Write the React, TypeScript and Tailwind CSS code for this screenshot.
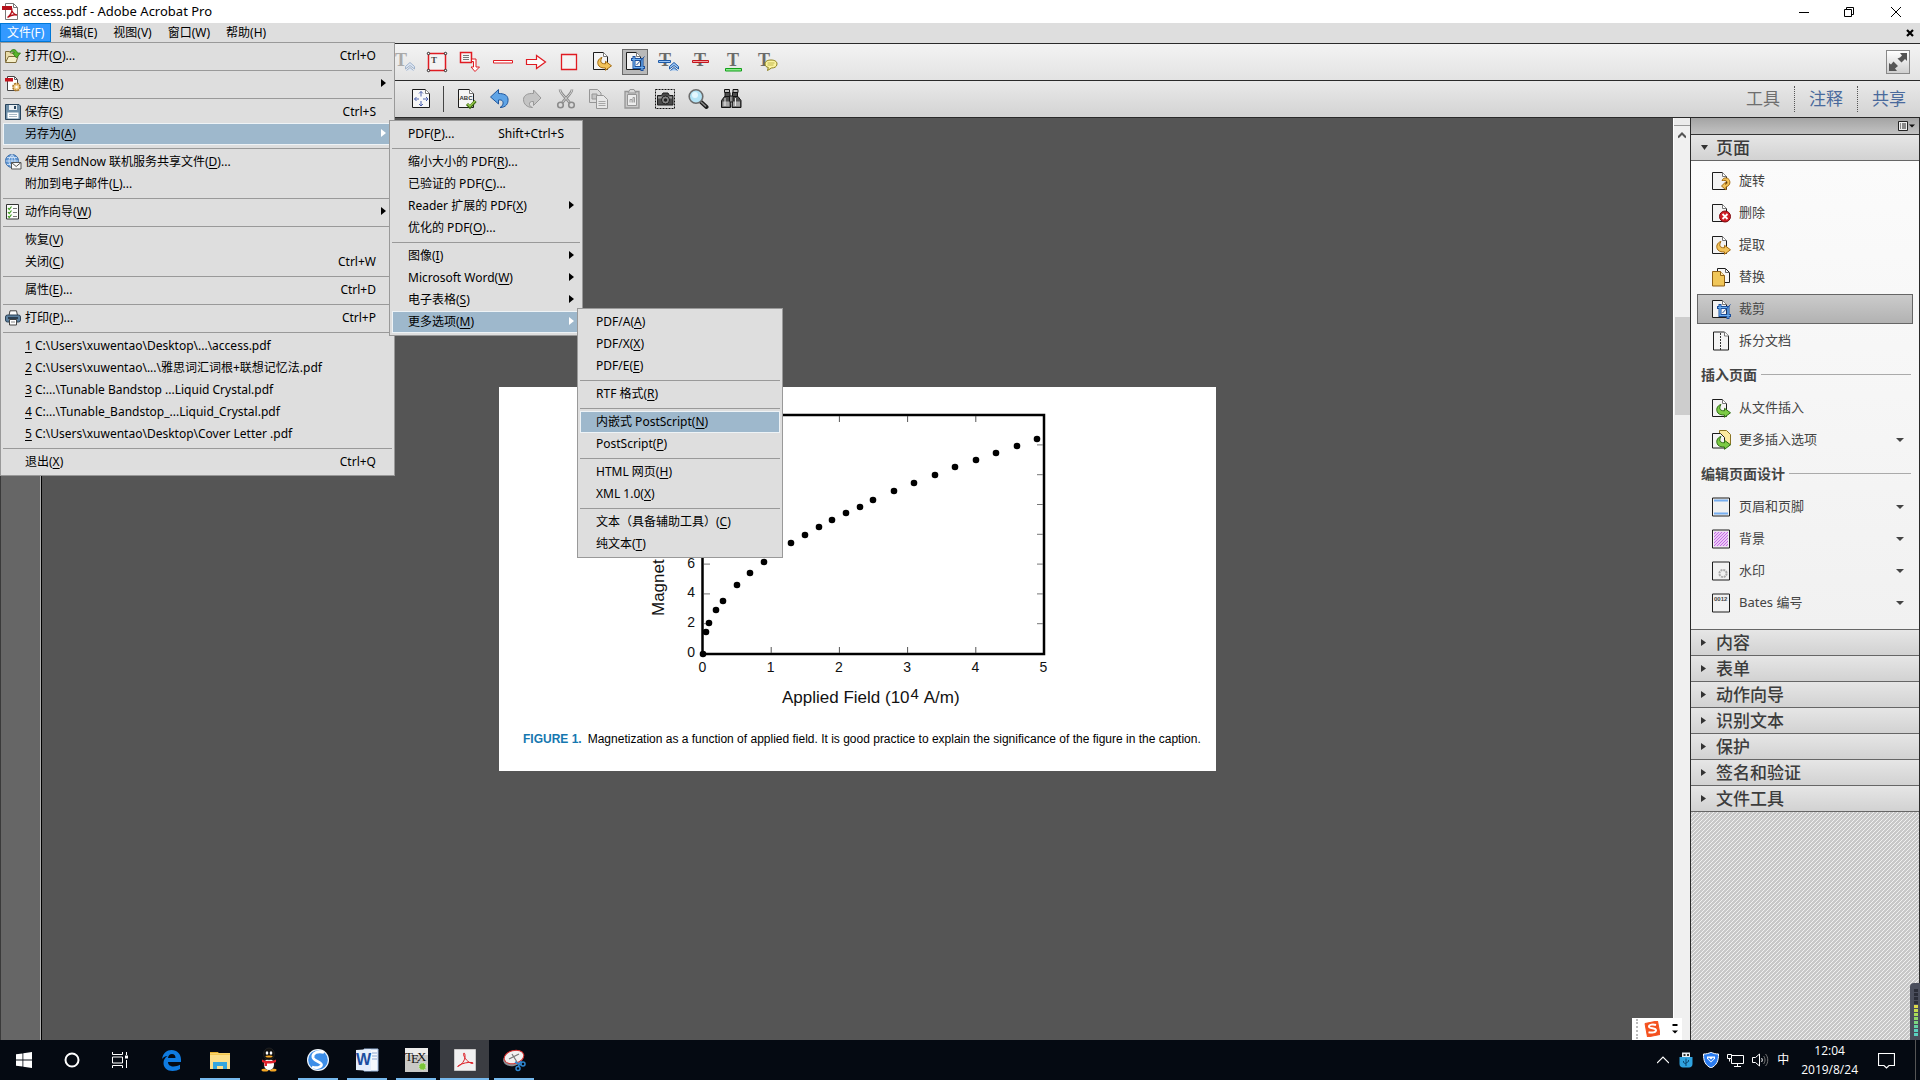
import React from 'react';

interface MenuEntry {
  label?: string;
  hotkey?: string;
  tail?: string;
  shortcut?: string;
  icon?: React.ReactNode;
  arrow?: boolean;
  active?: boolean;
  sub?: MenuEntry[];
  separator?: boolean;
}

const SEP: MenuEntry = { separator: true };

/* ---------- shared icon parts ---------- */

const Sheet = ({ fill = '#f4f4f4' }: { fill?: string }) => (
  <>
    <path d="M1.5 1.5h10l4 4v13h-14z" fill={fill} stroke="#1c1c1c" strokeLinejoin="round" />
    <path d="M11.5 1.5v4h4" fill="#fff" stroke="#777" />
  </>
);

const SheetIcon = ({ children }: { children?: React.ReactNode }) => (
  <svg width="20" height="20" viewBox="0 0 20 20">
    <Sheet />
    {children}
  </svg>
);

const CropMark = () => (
  <g fill="none">
    <path d="M9 5v11.500h11M6 8.500h11v11.500" stroke="#1d4f9c" strokeWidth="3" />
    <path d="M9 6v10.500h10M7 8.500h10v10.500" stroke="#6fb1f0" strokeWidth="1.200" />
    <path d="M11.500 14l8-8.500" stroke="#1d4f9c" />
  </g>
);

const SwooshRight = ({ fill, stroke }: { fill: string; stroke: string }) => (
  <path
    d="M10 6.500C6 7.500 4.500 12 7 15c1.500 1.800 4 2 6.500 2v2.300l6-4.500-6-4.500v2.500c-3 0-4.800-.800-4.700-2.800C8.800 8.500 9.300 7.500 10 6.500z"
    fill={fill}
    stroke={stroke}
    strokeLinejoin="round"
  />
);

const PdfIcon = () => (
  <svg width="17" height="17" viewBox="0 0 17 17">
    <path d="M3.500.500h8l4 4v12h-12z" fill="#fff" stroke="#777" />
    <path d="M11.500.500v4h4" fill="none" stroke="#777" />
    <path d="M5.500 14.500c3-2 5-6 4.300-9-.600 3 2 6 5.200 6.500-3-.600-7 .500-9.500 2.500z" fill="none" stroke="#b5121b" strokeWidth="1.300" />
    <path d="M0 3h10v4H0z" fill="#b5121b" />
  </svg>
);

/* ---------- file menu icons ---------- */

const OpenIcon = () => (
  <svg width="16" height="16" viewBox="0 0 16 16">
    <path d="M.5 13.500v-10h4l1 1.500h5v8.500z" fill="#e9dca8" stroke="#7d6b3a" />
    <path d="M.500 14.500l3-6h9.500l-2 6z" fill="#f6efc9" stroke="#7d6b3a" />
    <path d="M5 4c2-3.500 6-3.500 7.500 1H15.500l-4 5-4-5h2c-.500-2-2.500-2-4.500-1z" fill="#5ab52c" stroke="#2f7a14" strokeWidth=".8" />
  </svg>
);

const CreateIcon = () => (
  <svg width="16" height="16" viewBox="0 0 16 16">
    <path d="M2.500.500h7l3 3v11h-10z" fill="#fff" stroke="#444" />
    <path d="M9.500.500v3h3" fill="none" stroke="#666" />
    <path d="M0 2h8v3.500H0z" fill="#c4141d" />
    <circle cx="11.500" cy="11" r="3.600" fill="#f4d089" stroke="#a9762a" strokeDasharray="2 .8" strokeWidth="1.600" />
    <circle cx="11.500" cy="11" r="1.200" fill="#fff" />
  </svg>
);

const SaveIcon = () => (
  <svg width="16" height="16" viewBox="0 0 16 16">
    <path d="M.500.500h13.500l1.500 1.500v13.500H.500z" fill="#6f8fa8" stroke="#27425a" />
    <path d="M4 1h8v5H4z" fill="#e9eef2" />
    <path d="M9 2h2v3H9z" fill="#27425a" />
    <path d="M2.500 8.500h11v6h-11z" fill="#fff" />
    <path d="M4 10.500h8M4 12.500h8" stroke="#a9b8c4" />
  </svg>
);

const SendIcon = () => (
  <svg width="17" height="16" viewBox="0 0 17 16">
    <circle cx="7" cy="7" r="6.500" fill="#5f96d4" stroke="#3b6ba5" />
    <path d="M.500 7h13M7 .500v13M2 3.500h10M2 10.500h10M7 .500c-4 4-4 9 0 13M7 .500c4 4 4 9 0 13" fill="none" stroke="#dceafa" strokeWidth=".8" />
    <path d="M6.500 8.500h9.500v6.500H6.500z" fill="#fafafa" stroke="#555" />
    <path d="M6.500 8.500l4.700 4 4.800-4" fill="none" stroke="#555" />
  </svg>
);

const WizardIcon = () => (
  <svg width="16" height="16" viewBox="0 0 16 16">
    <path d="M1.500.500h12v14.500h-12z" fill="#fbfbfb" stroke="#333" />
    <path d="M3 4l1.200 1.500L6.500 2.500M3 8l1.200 1.500 2.300-3M3 12l1.200 1.500 2.300-3" fill="none" stroke="#3d9a1f" strokeWidth="1.200" />
    <path d="M8 4.500h4M8 8.500h4M8 12.500h4" stroke="#777" />
  </svg>
);

const PrintIcon = () => (
  <svg width="16" height="16" viewBox="0 0 16 16">
    <path d="M4 5.500L5 .800h6.500l1 4.700" fill="#fff" stroke="#444" />
    <rect x=".5" y="5" width="15" height="7" rx="2" fill="#5b7f9e" stroke="#2c4256" />
    <path d="M3 8h10" stroke="#1c2a36" strokeWidth="1.500" />
    <path d="M4.500 9.500h7v5.500h-7z" fill="#fff" stroke="#444" />
    <path d="M6 12h4" stroke="#888" />
  </svg>
);

const FILE_MENU: MenuEntry[] = [
  { label: '打开(', hotkey: 'O', tail: ')...', shortcut: 'Ctrl+O', icon: <OpenIcon /> },
  SEP,
  { label: '创建(', hotkey: 'R', tail: ')', icon: <CreateIcon />, arrow: true },
  SEP,
  { label: '保存(', hotkey: 'S', tail: ')', shortcut: 'Ctrl+S', icon: <SaveIcon /> },
  {
    label: '另存为(',
    hotkey: 'A',
    tail: ')',
    arrow: true,
    active: true,
    sub: [
      { label: 'PDF(', hotkey: 'P', tail: ')...', shortcut: 'Shift+Ctrl+S' },
      SEP,
      { label: '缩小大小的 PDF(', hotkey: 'R', tail: ')...' },
      { label: '已验证的 PDF(', hotkey: 'C', tail: ')...' },
      { label: 'Reader 扩展的 PDF(', hotkey: 'X', tail: ')', arrow: true },
      { label: '优化的 PDF(', hotkey: 'O', tail: ')...' },
      SEP,
      { label: '图像(', hotkey: 'I', tail: ')', arrow: true },
      { label: 'Microsoft Word(', hotkey: 'W', tail: ')', arrow: true },
      { label: '电子表格(', hotkey: 'S', tail: ')', arrow: true },
      {
        label: '更多选项(',
        hotkey: 'M',
        tail: ')',
        arrow: true,
        active: true,
        sub: [
          { label: 'PDF/A(', hotkey: 'A', tail: ')' },
          { label: 'PDF/X(', hotkey: 'X', tail: ')' },
          { label: 'PDF/E(', hotkey: 'E', tail: ')' },
          SEP,
          { label: 'RTF 格式(', hotkey: 'R', tail: ')' },
          SEP,
          { label: '内嵌式 PostScript(', hotkey: 'N', tail: ')', active: true },
          { label: 'PostScript(', hotkey: 'P', tail: ')' },
          SEP,
          { label: 'HTML 网页(', hotkey: 'H', tail: ')' },
          { label: 'XML 1.0(', hotkey: 'X', tail: ')' },
          SEP,
          { label: '文本（具备辅助工具）(', hotkey: 'C', tail: ')' },
          { label: '纯文本(', hotkey: 'T', tail: ')' },
        ],
      },
    ],
  },
  SEP,
  { label: '使用 SendNow 联机服务共享文件(', hotkey: 'D', tail: ')...', icon: <SendIcon /> },
  { label: '附加到电子邮件(', hotkey: 'L', tail: ')...' },
  SEP,
  { label: '动作向导(', hotkey: 'W', tail: ')', icon: <WizardIcon />, arrow: true },
  SEP,
  { label: '恢复(', hotkey: 'V', tail: ')' },
  { label: '关闭(', hotkey: 'C', tail: ')', shortcut: 'Ctrl+W' },
  SEP,
  { label: '属性(', hotkey: 'E', tail: ')...', shortcut: 'Ctrl+D' },
  SEP,
  { label: '打印(', hotkey: 'P', tail: ')...', shortcut: 'Ctrl+P', icon: <PrintIcon /> },
  SEP,
  { hotkey: '1', tail: ' C:\\Users\\xuwentao\\Desktop\\...\\access.pdf' },
  { hotkey: '2', tail: ' C:\\Users\\xuwentao\\...\\雅思词汇词根+联想记忆法.pdf' },
  { hotkey: '3', tail: ' C:...\\Tunable Bandstop ...Liquid Crystal.pdf' },
  { hotkey: '4', tail: ' C:...\\Tunable_Bandstop_...Liquid_Crystal.pdf' },
  { hotkey: '5', tail: ' C:\\Users\\xuwentao\\Desktop\\Cover Letter .pdf' },
  SEP,
  { label: '退出(', hotkey: 'X', tail: ')', shortcut: 'Ctrl+Q' },
];

const Menu = ({ items, className, root }: { items: MenuEntry[]; className: string; root?: boolean }) => (
  <ul className={`absolute z-20 border border-[#999] bg-[#dedede] p-0.5 text-black ${className}`}>
    {items.map((item, i) =>
      item.separator ? (
        <li key={i} className="flex h-1.5 items-center">
          <hr className="w-full border-t border-[#999]" />
        </li>
      ) : (
        <li key={i} className="relative">
          <button
            type="button"
            className={`flex h-[22px] w-full items-center border pr-[15px] text-left text-xs whitespace-pre ${
              item.active ? 'border-[#eef3f6] bg-[#9eb8cc]' : 'border-transparent'
            }`}
          >
            <span className={root ? 'w-[21px] shrink-0 pl-px' : 'w-[15px] shrink-0'}>{item.icon}</span>
            <span>
              {item.label}
              <u className="underline-offset-2">{item.hotkey}</u>
              {item.tail}
            </span>
            {item.shortcut && <span className="ml-auto">{item.shortcut}</span>}
            {item.arrow && (
              <svg width="5" height="8" viewBox="0 0 5 8" className="absolute top-1.5 right-1.5">
                <path d="M0 0l5 4-5 4z" fill={item.active ? '#fff' : '#000'} />
              </svg>
            )}
          </button>
          {item.sub && (
            <Menu
              items={item.sub}
              className={root ? '-top-[3px] left-full -ml-[3px] w-[194px]' : '-top-[3px] left-full -ml-[3px] w-[206px]'}
            />
          )}
        </li>
      )
    )}
  </ul>
);

const MENUS = ['编辑(E)', '视图(V)', '窗口(W)', '帮助(H)'];

const TitleBar = () => (
  <header className="flex h-[23px] shrink-0 items-center bg-white pl-0.5 text-[13px] text-black">
    <PdfIcon />
    <h1 className="ml-1">access.pdf - Adobe Acrobat Pro</h1>
    <div className="ml-auto flex">
      <button type="button" aria-label="最小化" className="flex h-5 w-[45px] items-center justify-center">
        <svg width="10" height="10" viewBox="0 0 10 10">
          <path d="M0 5.500h10" stroke="#000" />
        </svg>
      </button>
      <button type="button" aria-label="还原" className="flex h-5 w-[45px] items-center justify-center">
        <svg width="10" height="10" viewBox="0 0 10 10">
          <path d="M.500 2.500h7v7h-7zM2.500 2.500v-2h7v7h-2" fill="none" stroke="#000" />
        </svg>
      </button>
      <button type="button" aria-label="关闭" className="flex h-5 w-[49px] items-center justify-center">
        <svg width="10" height="10" viewBox="0 0 10 10">
          <path d="M0 0l10 10M10 0L0 10" stroke="#000" />
        </svg>
      </button>
    </div>
  </header>
);

const MenuBar = () => (
  <nav className="flex h-5 shrink-0 items-start bg-[#dedede] text-xs text-black">
    <div className="relative">
      <button type="button" className="block h-[19px] border border-[#0078d7] bg-[#3399ff] px-1.5 text-white">
        文件(F)
      </button>
      <Menu items={FILE_MENU} className="top-[19px] left-0 w-[395px]" root />
    </div>
    {MENUS.map(m => (
      <button key={m} type="button" className="h-[19px] px-2">
        {m}
      </button>
    ))}
    <button type="button" aria-label="关闭文档" className="mr-1.5 ml-auto self-center">
      <svg width="8" height="8" viewBox="0 0 8 8">
        <path d="M1 1l6 6M7 1L1 7" stroke="#000" strokeWidth="2.200" />
      </svg>
    </button>
  </nav>
);

/* ---------- toolbar icons ---------- */

const LetterT = ({ fill = '#6a6a6a' }: { fill?: string }) => (
  <text x="2" y="15" fontFamily="Liberation Serif, serif" fontSize="18" fontWeight="700" fill={fill}>
    T
  </text>
);

const Caret = ({ fill, stroke }: { fill: string; stroke: string }) => (
  <path d="M12.500 15.500l4.500-4 4.500 4v2.500l-4.500-3.500-4.500 3.500zM13.500 19.500l3.500-3 3.500 3" fill={fill} stroke={stroke} />
);

const ICON = 'h-[22px] w-[22px]';

const COMMENT_TOOLS: { name: string; icon: React.ReactNode; active?: boolean }[] = [
  {
    name: '插入文本',
    icon: (
      <>
        <LetterT fill="#a9a9a9" />
        <Caret fill="#dde6f2" stroke="#9fb2cc" />
      </>
    ),
  },
  {
    name: '文本框',
    icon: (
      <>
        <path d="M2.500 2.500h17v17h-17z" fill="#f3f3f3" stroke="#e01b22" strokeWidth="1.500" />
        <text x="5" y="12" fontFamily="Liberation Serif, serif" fontSize="9" fontWeight="700" fill="#444">
          T
        </text>
        {[2.5, 19.5].map(x =>
          [2.5, 19.5].map(y => <circle key={`${x}-${y}`} cx={x} cy={y} r="1.2" fill="#fff" stroke="#222" />)
        )}
      </>
    ),
  },
  {
    name: '标注',
    icon: (
      <>
        <path d="M1.500 1.500h11v10h-11z" fill="#f6f6f6" stroke="#e01b22" strokeWidth="1.500" />
        <path d="M4 4.500h6M4 6.500h6M4 8.500h6" stroke="#777" />
        <path d="M12.500 8h4.500v8h3.500L16 20.500l-4-4.500h2.500V10.500h-2z" fill="#fff" stroke="#e01b22" />
      </>
    ),
  },
  { name: '线条', icon: <path d="M1.500 9.500h19v2.500h-19z" fill="#fff" stroke="#e01b22" /> },
  {
    name: '箭头',
    icon: <path d="M1.500 8.500h10V4.500l9 6.500-9 6.500v-4h-10z" fill="#fbfbfb" stroke="#e01b22" strokeWidth="1.200" />,
  },
  { name: '矩形', icon: <path d="M3.500 3.500h15v15h-15z" fill="#f4f4f4" stroke="#e01b22" strokeWidth="1.300" /> },
  {
    name: '提取页面',
    icon: (
      <g transform="translate(1 0)">
        <Sheet />
        <SwooshRight fill="#f2c258" stroke="#a36b12" />
      </g>
    ),
  },
  {
    name: '裁剪页面',
    active: true,
    icon: (
      <g transform="translate(1 0)">
        <Sheet />
        <CropMark />
      </g>
    ),
  },
  {
    name: '替换文本',
    icon: (
      <>
        <LetterT />
        <path d="M1.500 9.500h12v2h-12z" fill="#9cc5f3" stroke="#1d5aa8" />
        <Caret fill="#9cc5f3" stroke="#1d5aa8" />
      </>
    ),
  },
  {
    name: '删除线',
    icon: (
      <>
        <g transform="translate(2 0)">
          <LetterT />
        </g>
        <path d="M2.500 9.500h16v2h-16z" fill="#f0a0a0" stroke="#c4141d" />
      </>
    ),
  },
  {
    name: '下划线',
    icon: (
      <>
        <g transform="translate(2 0)">
          <LetterT />
        </g>
        <path d="M2.500 17.500h16v2.500h-16z" fill="#8eea8e" stroke="#13a01b" />
      </>
    ),
  },
  {
    name: '添加附注',
    icon: (
      <>
        <LetterT />
        <path
          d="M9 13c0-3 3-4 6-4s6 1 6 4-3 4-5.500 4l-4 2.500.800-3c-2-.500-3.300-1.500-3.300-3.500z"
          fill="#fbf3a0"
          stroke="#8c7f1a"
        />
        <path d="M11.500 12h7M11.500 14h6" stroke="#b3a63a" strokeWidth=".8" />
      </>
    ),
  },
];

const EDIT_TOOLS: { name: string; icon: React.ReactNode }[] = [
  {
    name: '拼写检查',
    icon: (
      <>
        <path d="M2.500 1.500h11l4 4v14h-15z" fill="#f6f6f6" stroke="#1c1c1c" />
        <path d="M13.500 1.500v4h4" fill="#fff" stroke="#777" />
        <text x="3.500" y="12" fontFamily="Liberation Sans, sans-serif" fontSize="6" fontWeight="700" fill="#333">
          ABC
        </text>
        <path d="M11 16l3 3 5.500-6" fill="none" stroke="#3c6b10" strokeWidth="3" />
        <path d="M11.500 16l2.500 2.500 5-5.500" fill="none" stroke="#9ed04f" strokeWidth="1.200" />
      </>
    ),
  },
  {
    name: '撤消',
    icon: (
      <path
        d="M9.500 1.500L1.500 9l8 7v-4c3-.300 5 .500 4.500 4-.200 1.500-1.500 2.500-3 3.500 6 0 8.500-4 8-8.500-.500-4-4-5.500-9.500-5.500z"
        fill="#5fa4e6"
        stroke="#1f569c"
        strokeLinejoin="round"
      />
    ),
  },
  {
    name: '重做',
    icon: (
      <path
        d="M11.500 5.500v-3.500l7.500 8-7.500 7.500v-4c-3-.300-4.500 1-4 3 .200 1.500 1.500 2.500 3 3C5 19.500 1.500 16 1.500 11.500c0-4 4-6.500 10-6z"
        fill="#c4c4c4"
        stroke="#989898"
        strokeLinejoin="round"
      />
    ),
  },
  {
    name: '剪切',
    icon: (
      <g fill="none" stroke="#8b8b8b">
        <path d="M5 1.500c0 4 7 9 9.500 13M17 1.500c0 4-7 9-9.500 13" strokeWidth="2.600" />
        <path d="M5 1.500c0 4 7 9 9.500 13M17 1.500c0 4-7 9-9.500 13" stroke="#d8d8d8" strokeWidth="1" />
        <circle cx="5.500" cy="17" r="2.800" strokeWidth="1.600" />
        <circle cx="16.500" cy="17" r="2.800" strokeWidth="1.600" />
      </g>
    ),
  },
  {
    name: '复制',
    icon: (
      <g stroke="#969696">
        <path d="M1.500 1.500h8l3.500 3.500v9.500H1.500z" fill="#dcdcdc" />
        <path d="M4 6h5v5H4z" fill="#c4c4c4" />
        <path d="M8.500 7.500h7l4 4v9h-11z" fill="#e8e8e8" />
        <path d="M10.500 13.500h7M10.500 15.500h7M10.500 17.500h7" strokeWidth=".8" />
      </g>
    ),
  },
  {
    name: '粘贴',
    icon: (
      <g stroke="#969696">
        <path d="M4 3.500h14v16.500H4z" fill="#c9c9c9" strokeWidth="1.300" />
        <path d="M7 5l2-3.500h4L15 5z" fill="#d8d8d8" />
        <path d="M6.500 6.500h9v11h-9z" fill="#ededed" />
        <path d="M9 14.500v-3h2v3M12 14.500v-5h1.500v5" fill="none" strokeWidth=".9" />
      </g>
    ),
  },
  {
    name: '快照',
    icon: (
      <>
        <path d="M1.500 1.500h19v19h-19z" fill="none" stroke="#111" strokeDasharray="2 1" />
        <path d="M3.500 7.500h4l1.500-2.500h5l1.500 2.500h3.500v9.500H3.500z" fill="#4a4a4a" stroke="#1d1d1d" />
        <path d="M4 8.500h14v2H4z" fill="#9a9a9a" />
        <circle cx="11.500" cy="12" r="4" fill="#888" stroke="#1d1d1d" />
        <circle cx="11.500" cy="12" r="1.800" fill="#222" />
      </>
    ),
  },
  {
    name: '缩放',
    icon: (
      <>
        <path d="M13 13l6.500 6" stroke="#1c1c1c" strokeWidth="4" strokeLinecap="round" />
        <path d="M14 14l5 4.500" stroke="#8a8a8a" strokeWidth="1.500" />
        <circle cx="9" cy="8.500" r="6.800" fill="#b4e3f5" stroke="#6c6c6c" strokeWidth="1.600" />
        <circle cx="8" cy="7" r="3" fill="#e3f6fd" />
      </>
    ),
  },
  {
    name: '查找',
    icon: (
      <g fill="#4c4c4c" stroke="#141414">
        <path d="M5 4.500h5v5H5zM12.500 4.500h5v5h-5z" />
        <path d="M4.500 1.500h5v3h-5zM13 1.500h5v3h-5z" fill="#bdbdbd" />
        <path d="M4.500 8.500h5.500l.500 11h-9v-7zM12.500 8.500H18l3 4v7h-9z" />
        <path d="M9.500 8h3.500v6H9.500z" fill="#8e8e8e" />
        <path d="M2.500 13.500h7v5h-7zM13 13.500h7v5h-7z" fill="#a5a5a5" stroke="none" />
        <path d="M5 10v8M15.500 10v8" stroke="#e8e8e8" />
      </g>
    ),
  },
];

const Toolbars = () => (
  <div className="flex shrink-0 flex-col border-t border-[#2a2a2a]">
    <div className="flex h-9 items-center bg-linear-to-b from-[#f3f3f3] to-[#e3e3e3] pl-[387px]">
      {COMMENT_TOOLS.map(t => (
        <button key={t.name} type="button" aria-label={t.name} className="flex w-[33px] justify-center">
          <span
            className={
              t.active
                ? 'flex h-[26px] w-[26px] items-center justify-center border border-[#6a6a6a] bg-[#b9b9b9]'
                : 'flex h-[26px] w-[26px] items-center justify-center'
            }
          >
            <svg viewBox="0 0 22 22" className={ICON}>
              {t.icon}
            </svg>
          </span>
        </button>
      ))}
      <button
        type="button"
        aria-label="阅读模式"
        className="mr-2.5 ml-auto flex h-6 w-6 items-center justify-center border border-[#888] bg-linear-to-b from-white to-[#cfcfcf]"
      >
        <svg width="20" height="20" viewBox="0 0 20 20" fill="#555">
          <path d="M12 1h7v8l-2-2-3.500 3.500-4-4L12 5.500 14 3.500zM1 19v-8l2 1.500L5.500 9.500l4.500 4.500-3 2.500L9 19z" />
        </svg>
      </button>
    </div>
    <div className="flex h-[38px] items-center border-y border-[#2a2a2a] bg-linear-to-b from-[#e9e9e9] to-[#d3d3d3] pl-[404px]">
      <button type="button" aria-label="适合页面" className="flex w-[33px] justify-center">
        <svg viewBox="0 0 22 22" className={ICON}>
          <path d="M2.500 1.500h13l4 4v14h-17z" fill="#f7f7f7" stroke="#1c1c1c" />
          <path d="M15.500 1.500v4h4" fill="#fff" stroke="#777" />
          <path
            d="M11 3.500v5M11 13v5M4.500 11h4.500M13 11h5M9 5.500l2-2 2 2M9 16l2 2 2-2M6.500 9l-2 2 2 2M16 9l2 2-2 2"
            fill="none"
            stroke="#4d62b0"
          />
        </svg>
      </button>
      <span className="mx-1.5 h-[26px] w-px bg-[#444]" />
      {EDIT_TOOLS.map(t => (
        <button key={t.name} type="button" aria-label={t.name} className="flex w-[33px] justify-center">
          <svg viewBox="0 0 22 22" className={ICON}>
            {t.icon}
          </svg>
        </button>
      ))}
      <div className="mr-3.5 ml-auto flex h-7 items-center text-[17px]">
        <button type="button" className="pr-3.5 text-[#6e6e6e]">
          工具
        </button>
        <button type="button" className="border-l border-dotted border-[#555] px-3.5 text-[#4a6a9c]">
          注释
        </button>
        <button type="button" className="border-l border-dotted border-[#555] pl-3.5 text-[#4a6a9c]">
          共享
        </button>
      </div>
    </div>
  </div>
);

/* ---------- document ---------- */

const POINTS = [
  [133, 354], [136, 332], [139, 323], [146, 310], [153, 301], [167, 285], [180, 273], [194, 262],
  [208, 252], [221, 243], [235, 235], [249, 227], [262, 220], [276, 213], [290, 207], [303, 200],
  [324, 191], [344, 183], [365, 175], [385, 167], [406, 160], [426, 153], [447, 146], [467, 139],
];

const Chart = () => (
  <svg viewBox="-71 87 717 322" className="block h-[322px] w-[717px]" fontFamily="Liberation Sans, sans-serif">
    <rect x="132.500" y="115" width="341.500" height="239" fill="none" stroke="#000" strokeWidth="2.500" />
    {[1, 2, 3, 4].map(n => (
      <path key={n} d={`M${133 + n * 68.200} 353v-6M${133 + n * 68.200} 116v6`} stroke="#555" />
    ))}
    {[2, 4, 6, 8, 10, 12, 14].map(n => (
      <path key={n} d={`M134 ${353.500 - n * 14.900}h6M473 ${353.500 - n * 14.900}h-6`} stroke="#777" />
    ))}
    {POINTS.map(([x, y]) => (
      <circle key={x} cx={x} cy={y} r="3.300" />
    ))}
    <g fontSize="14" fill="#111">
      {[0, 1, 2, 3, 4, 5].map(n => (
        <text key={n} x={132.500 + n * 68.200} y="372" textAnchor="middle">
          {n}
        </text>
      ))}
      {[0, 2, 4, 6].map(n => (
        <text key={n} x="125" y={357 - n * 14.900} textAnchor="end">
          {n}
        </text>
      ))}
    </g>
    <g fontSize="17" fill="#111">
      <text x="212" y="403">
        Applied Field (10
        <tspan dx="1" dy="-4" fontSize="15">
          4
        </tspan>
        <tspan dx="1" dy="4">
          {' '}
          A/m)
        </tspan>
      </text>
      <text transform="translate(94 316) rotate(-90)">Magnet</text>
    </g>
  </svg>
);

const Document = () => (
  <main className="flex min-w-0 flex-1 bg-[#555]">
    <div className="w-[42px] shrink-0 border-r border-l border-r-black border-l-[#3a3a3a] bg-[#666]">
      <div className="h-full border-r border-[#b0b0b0]" />
    </div>
    <div className="flex flex-1 items-center justify-center">
      <figure className="bg-white pb-4">
        <Chart />
        <figcaption className="flex h-[46px] items-end gap-1.5 pb-2 pl-6 font-['Liberation_Sans',sans-serif] text-xs whitespace-nowrap text-black">
          <b className="text-[#1577b0]">FIGURE 1.</b>
          <span>
            Magnetization as a function of applied field. It is good practice to explain the significance of the figure in
            the caption.
          </span>
        </figcaption>
      </figure>
    </div>
    <div className="flex w-[17px] shrink-0 flex-col items-center border-l border-white bg-[#f0f0f0]">
      <div className="h-2 w-full border-b border-[#999] bg-[#ececec]" />
      <svg width="8" height="7" viewBox="0 0 8 7" className="mt-1.5">
        <path d="M0 5.500l4-4 4 4" fill="none" stroke="#555" strokeWidth="2" />
      </svg>
      <div className="mt-[178px] h-[98px] w-[15px] bg-[#cdcdcd]" />
    </div>
  </main>
);

/* ---------- tools panel ---------- */

const ReplaceIcon = () => (
  <svg width="20" height="20" viewBox="0 0 20 20">
    <path d="M6.500 1.500h8l4 4v10h-12z" fill="#f7f7f7" stroke="#1c1c1c" />
    <path d="M14.500 1.500v4h4" fill="none" stroke="#666" />
    <path d="M1.500 4.500h8l4 4v10.500h-12z" fill="#f0c659" stroke="#8f5f14" />
    <path d="M9.500 4.500v4h4" fill="#fbe6a8" stroke="#8f5f14" />
  </svg>
);

const BoxIcon = ({ children }: { children: React.ReactNode }) => (
  <svg width="20" height="20" viewBox="0 0 20 20">
    <path d="M1.500 1h17v18h-17z" fill="#f1f1f1" stroke="#1c1c1c" />
    {children}
  </svg>
);

interface ToolRow {
  label: string;
  icon: React.ReactNode;
  more?: boolean;
  active?: boolean;
}

const PAGE_TOOLS: ToolRow[] = [
  {
    label: '旋转',
    icon: (
      <SheetIcon>
        <path
          d="M11 9.500C12 6.500 16 6 18 8.500c2 3 .500 6.500-3 7.500v3l-4.500-4 4-3.800v2.300c1.500-.500 2-2 1.300-3-.800-1.300-2.500-1-4.800-1z"
          fill="#f2c258"
          stroke="#a36b12"
          strokeLinejoin="round"
        />
      </SheetIcon>
    ),
  },
  {
    label: '删除',
    icon: (
      <SheetIcon>
        <circle cx="14" cy="13.500" r="5.500" fill="#cf1f26" stroke="#7e0d12" />
        <path d="M11.500 11l5 5M16.500 11l-5 5" stroke="#fff" strokeWidth="1.800" />
      </SheetIcon>
    ),
  },
  {
    label: '提取',
    icon: (
      <SheetIcon>
        <SwooshRight fill="#f2c258" stroke="#a36b12" />
      </SheetIcon>
    ),
  },
  { label: '替换', icon: <ReplaceIcon /> },
  {
    label: '裁剪',
    active: true,
    icon: (
      <SheetIcon>
        <CropMark />
      </SheetIcon>
    ),
  },
  {
    label: '拆分文档',
    icon: (
      <svg width="20" height="20" viewBox="0 0 20 20">
        <path d="M2.500 1h11l4 4v14h-15z" fill="#f4f4f4" stroke="#1c1c1c" />
        <path d="M13.500 1v4h4" fill="#fff" stroke="#777" />
        <path d="M9.500 2v17" stroke="#333" strokeDasharray="2 1" />
      </svg>
    ),
  },
];

const INSERT_TOOLS: ToolRow[] = [
  {
    label: '从文件插入',
    icon: (
      <SheetIcon>
        <SwooshRight fill="#7ccb45" stroke="#2f6e14" />
      </SheetIcon>
    ),
  },
  {
    label: '更多插入选项',
    more: true,
    icon: (
      <svg width="20" height="20" viewBox="0 0 20 20">
        <path d="M8.500.500h7l4 4v10h-11z" fill="#fbeaa0" stroke="#8a7424" />
        <path d="M1.500 3.500h8l4 4v10.500h-12z" fill="#f4f4f4" stroke="#1c1c1c" />
        <SwooshRight fill="#7ccb45" stroke="#2f6e14" />
      </svg>
    ),
  },
];

const DESIGN_TOOLS: ToolRow[] = [
  {
    label: '页眉和页脚',
    more: true,
    icon: (
      <BoxIcon>
        <path d="M3 3.500h14M3 16.500h14" stroke="#76aef0" strokeWidth="2" />
      </BoxIcon>
    ),
  },
  {
    label: '背景',
    more: true,
    icon: (
      <BoxIcon>
        <path d="M3 2.500h14v15H3z" fill="#ecc8f6" />
        <path
          d="M3 5l2-2M3 8l5-5M3 11l8-8M3 14l11-11M3 17L17 3M6 17L17 6M9 17l8-8M12 17l5-5M15 17l2-2"
          stroke="#c46ee6"
        />
      </BoxIcon>
    ),
  },
  {
    label: '水印',
    more: true,
    icon: (
      <BoxIcon>
        <circle cx="12" cy="12.500" r="3.600" fill="none" stroke="#aaa" strokeWidth="2" strokeDasharray="2 .8" />
      </BoxIcon>
    ),
  },
  {
    label: 'Bates 编号',
    more: true,
    icon: (
      <BoxIcon>
        <text x="3" y="8" fontFamily="Liberation Sans, sans-serif" fontSize="6" fontWeight="700" fill="#444">
          0012
        </text>
      </BoxIcon>
    ),
  },
];

const ToolList = ({ rows }: { rows: ToolRow[] }) => (
  <ul>
    {rows.map(r => (
      <li key={r.label} className="px-1.5 py-px">
        <button
          type="button"
          className={`flex h-[30px] w-full items-center gap-2 border pr-2 pl-[13px] text-[13px] text-[#444] ${
            r.active ? 'border-[#666] bg-linear-to-b from-[#cbcbcb] to-[#b2b2b2]' : 'border-transparent'
          }`}
        >
          {r.icon}
          <span>{r.label}</span>
          {r.more && (
            <svg width="8" height="4" viewBox="0 0 8 4" className="ml-auto">
              <path d="M0 0h8L4 4z" fill="#444" />
            </svg>
          )}
        </button>
      </li>
    ))}
  </ul>
);

const SectionTitle = ({ children }: { children: React.ReactNode }) => (
  <h3 className="flex h-[35px] items-center gap-1 pr-2 pl-2.5 text-sm font-bold text-[#444]">
    {children}
    <span className="h-px flex-1 bg-[#aaa]" />
  </h3>
);

const CLOSED_PANELS = ['内容', '表单', '动作向导', '识别文本', '保护', '签名和验证', '文件工具'];

const PANEL_HEAD =
  'flex h-[26px] w-full shrink-0 items-center border-b border-[#666] bg-linear-to-b from-[#e6e6e6] to-[#d2d2d2] pl-2.5 text-[17px] leading-6 font-medium text-[#3c3c3c]';

const ToolsPanel = () => (
  <aside className="flex w-[230px] shrink-0 flex-col border-x border-[#2a2a2a] bg-[linear-gradient(135deg,#f0f0f0_12.5%,#c8c8c8_12.5%,#c8c8c8_50%,#f0f0f0_50%,#f0f0f0_62.5%,#c8c8c8_62.5%)] bg-[length:4px_4px]">
    <div className="flex h-[17px] shrink-0 items-center justify-end border-b border-[#333] bg-linear-to-b from-[#a4a4a4] to-[#c2c2c2] pr-1">
      <button type="button" aria-label="面板选项">
        <svg width="17" height="10" viewBox="0 0 17 10">
          <path d="M.500.500h9v9h-9z" fill="#eee" stroke="#222" />
          <path d="M2 3h1M4 3h4M2 5h1M4 5h4M2 7h1M4 7h4" stroke="#222" />
          <path d="M11 3.500h6l-3 3z" fill="#111" />
        </svg>
      </button>
    </div>
    <button type="button" className={PANEL_HEAD}>
      <svg width="7" height="5" viewBox="0 0 7 5" className="mr-2">
        <path d="M0 0h7L3.500 5z" fill="#333" />
      </svg>
      页面
    </button>
    <div className="border-b border-[#666] bg-linear-to-b from-[#fbfbfb] to-[#f1f1f1] pt-1 pb-2.5">
      <ToolList rows={PAGE_TOOLS} />
      <SectionTitle>插入页面</SectionTitle>
      <ToolList rows={INSERT_TOOLS} />
      <SectionTitle>编辑页面设计</SectionTitle>
      <ToolList rows={DESIGN_TOOLS} />
    </div>
    {CLOSED_PANELS.map(p => (
      <button key={p} type="button" className={PANEL_HEAD}>
        <svg width="5" height="7" viewBox="0 0 5 7" className="mr-2.5">
          <path d="M0 0l5 3.500L0 7z" fill="#333" />
        </svg>
        {p}
      </button>
    ))}
  </aside>
);

/* ---------- taskbar ---------- */

const TASKS: { name: string; running?: boolean; active?: boolean; icon: React.ReactNode }[] = [
  {
    name: 'Edge',
    icon: (
      <path
        d="M2 10C3 4 7 1 11.500 1 17 1 21 5 21 10.500V13H8c0 3 2.500 4.500 5.500 4.500 2.500 0 4.500-.500 6.500-1.700V20c-2 1.200-4.500 2-7.500 2C7 22 3.500 18.500 3.500 14c0-3 1.500-5.500 4-7C5 7 3 8.500 2 10zm6-1h7.500c0-2.500-1.300-4-3.500-4s-3.700 1.500-4 4z"
        fill="#0f7be0"
      />
    ),
  },
  {
    name: '文件资源管理器',
    running: true,
    icon: (
      <>
        <path d="M1 3h8l1.500 2H1z" fill="#e8b12e" />
        <path d="M1 4h20v16H1z" fill="#fde08a" />
        <path d="M1 4.500h20V6H1z" fill="#f4c84f" />
        <path d="M4 20v-7h14v7h-4v-3H8v3z" fill="#35a7dd" />
      </>
    ),
  },
  {
    name: 'QQ',
    icon: (
      <>
        <ellipse cx="7" cy="21" rx="3.500" ry="1.500" fill="#f5a623" />
        <ellipse cx="15" cy="21" rx="3.500" ry="1.500" fill="#f5a623" />
        <ellipse cx="11" cy="14.500" rx="7" ry="6.500" fill="#111" />
        <ellipse cx="11" cy="15.500" rx="5" ry="5.500" fill="#fff" />
        <ellipse cx="11" cy="5" rx="5.500" ry="6" fill="#111" stroke="#333" strokeWidth=".5" />
        <ellipse cx="9" cy="4" rx="1.300" ry="1.800" fill="#fff" />
        <ellipse cx="13" cy="4" rx="1.300" ry="1.800" fill="#fff" />
        <ellipse cx="11" cy="7.500" rx="3.500" ry="1" fill="#f5a623" />
        <path d="M4 10.500c4 2 10 2 14 0v2.500c-3 1.500-6 1.700-9 1.500V17H6.500v-3L4 13z" fill="#e0202a" />
      </>
    ),
  },
  {
    name: '搜狗浏览器',
    running: true,
    icon: (
      <>
        <circle cx="11" cy="11" r="11" fill="#f4f8fd" />
        <circle cx="11" cy="11" r="9.800" fill="#3d8ee8" />
        <path
          d="M17 3.500C11 1.500 5 4 6 8.500c1 4 9 4 8.500 7.500-.500 2.500-5 3.500-9.500 2"
          fill="none"
          stroke="#fff"
          strokeWidth="2.800"
        />
      </>
    ),
  },
  {
    name: 'Word',
    running: true,
    icon: (
      <>
        <path d="M8 0h14v22H8z" fill="#f6f9fd" stroke="#9db9df" />
        <path d="M16 4h5M16 7h5M16 10h5" stroke="#8ca9d4" />
        <path d="M0 1l15-1v22L0 21z" fill="#e4eefb" />
        <text x="0" y="16" fontFamily="Liberation Sans, sans-serif" fontSize="16" fontWeight="700" fill="#1c4fa0">
          W
        </text>
      </>
    ),
  },
  {
    name: 'TeX',
    running: true,
    icon: (
      <>
        <path d="M0-1h23v24H0z" fill="#c9c9c6" />
        <path d="M0-1h23v7H0z" fill="#ececea" />
        <text x="0" y="12" fontFamily="Liberation Serif, serif" fontSize="13" fill="#111">
          T
        </text>
        <text x="6" y="14" fontFamily="Liberation Serif, serif" fontSize="13" fill="#111">
          E
        </text>
        <text x="12" y="12" fontFamily="Liberation Serif, serif" fontSize="13" fill="#111">
          X
        </text>
        <circle cx="17.500" cy="17.500" r="3.500" fill="#7cc63a" stroke="#dff3c8" strokeDasharray="1.500 1" />
      </>
    ),
  },
  {
    name: 'Adobe Acrobat Pro',
    running: true,
    active: true,
    icon: (
      <>
        <path d="M.500.500h21v21h-21z" fill="#f1f1f1" stroke="#c9c9c9" />
        <path
          d="M4 17.500c5-2.500 8-8 6.800-12.500-.300-1.500-1.800-1-1.300.500 1 4 4.500 8 8.500 9 1.500.300 1.500-1 0-1-4-.500-9 .500-13.500 3-1 .600-1 1.300-.500 1z"
          fill="none"
          stroke="#dd2027"
        />
      </>
    ),
  },
  {
    name: '截图工具',
    running: true,
    icon: (
      <>
        <ellipse cx="10" cy="10" rx="10" ry="7" transform="rotate(-15 10 10)" fill="#8a8f96" />
        <ellipse cx="11" cy="8" rx="10" ry="6.500" transform="rotate(-15 11 8)" fill="#f1f1f1" stroke="#d8302f" />
        <path d="M6 10l10-5M9 5l5 8" stroke="#777" strokeWidth="1.200" />
        <path d="M12 13l6 3M18 12l-3 6" stroke="#2f86d0" strokeWidth="1.500" />
        <circle cx="20" cy="15" r="2" fill="none" stroke="#2f86d0" strokeWidth="1.500" />
        <circle cx="15" cy="19.500" r="2" fill="none" stroke="#2f86d0" strokeWidth="1.500" />
      </>
    ),
  },
];

const Taskbar = () => (
  <footer className="flex h-10 shrink-0 bg-[#050a12] text-xs text-white">
    <div className="mr-0.5 grid w-36 grid-cols-3">
      <button type="button" aria-label="开始" className="flex items-center justify-center">
        <svg width="16" height="16" viewBox="0 0 16 16" fill="#fff">
          <path d="M0 2.300L6.500 1.400v6.200H0zM7.300 1.300L16 0v7.600H7.300zM0 8.400h6.500v6.200L0 13.700zM7.300 8.400H16V16l-8.700-1.300z" />
        </svg>
      </button>
      <button type="button" aria-label="Cortana" className="flex items-center justify-center">
        <svg width="16" height="16" viewBox="0 0 16 16">
          <circle cx="8" cy="8" r="6.500" fill="none" stroke="#fff" strokeWidth="2" />
        </svg>
      </button>
      <button type="button" aria-label="任务视图" className="flex items-center justify-center">
        <svg width="17" height="16" viewBox="0 0 17 16" fill="none" stroke="#fff">
          <path d="M.500 0v2.500h10V0M.500 16v-2.500h10V16M.500 5h10v6H.500zM14.500 0v3M14.500 8v8" />
          <path d="M13 3.500h3v3h-3z" fill="#fff" stroke="none" />
        </svg>
      </button>
    </div>
    <div className="grid w-[392px] grid-cols-8">
      {TASKS.map(t => (
        <button
          key={t.name}
          type="button"
          aria-label={t.name}
          className={`flex flex-col items-center justify-between pt-[9px] ${t.active ? 'bg-[#3b3d42]' : ''}`}
        >
          <svg viewBox="0 0 22 22" className={`${ICON} overflow-visible`}>
            {t.icon}
          </svg>
          <span className={`h-0.5 ${t.active ? 'w-full' : 'w-10'} ${t.running ? 'bg-[#76b9ed]' : ''}`} />
        </button>
      ))}
    </div>
    <div className="ml-auto flex items-center">
      <svg width="12" height="8" viewBox="0 0 12 8">
        <path d="M0 7l6-6 6 6" fill="none" stroke="#fff" strokeWidth="1.200" />
      </svg>
      <svg width="14" height="16" viewBox="0 0 14 16" className="ml-2.5">
        <path d="M3 .500h8v5H3z" fill="#e9eef2" />
        <path d="M4.500 2h2v2h-2zM8 2h2v2H8z" fill="#333" />
        <path d="M.500 5h13v7c0 2-1.500 3.500-3.500 3.500H4C2 15.500.500 14 .500 12z" fill="#2fa3e0" />
        <path d="M7 6.500v7.500M7 12l-2.500-1.500V9M7 11l2.500-1.500V8" fill="none" stroke="#0b4770" />
      </svg>
      <svg width="16" height="16" viewBox="0 0 16 16" className="ml-2.5">
        <path d="M8 0c2 1.500 4.500 2 7.500 2 0 7-1.500 11-7.500 14C2 13 .500 9 .500 2 3.500 2 6 1.500 8 0z" fill="#2b7cf0" stroke="#fff" />
        <path d="M4 4.500h8v2l-4 4-4-4z" fill="#fff" />
        <path d="M5.500 6L8 8.500 10.500 6" fill="none" stroke="#2b7cf0" strokeWidth="1.300" />
      </svg>
      <svg width="17" height="15" viewBox="0 0 17 15" className="ml-2" fill="none" stroke="#fff">
        <path d="M5 2.500h11.500v8H4.500V6M10.500 10.500v3M7 13.500h7M.500 1.500h4v4h-4zM2.500 5.500v3" />
      </svg>
      <svg width="17" height="14" viewBox="0 0 17 14" className="ml-2" fill="none" stroke="#fff">
        <path d="M.500 4.500h3l4-3.500v12l-4-3.500h-3zM9.500 5c1 1 1 3 0 4" />
        <path d="M11.500 3c2 2 2 6 0 8M13.500 1c3 3 3 9 0 12" stroke="#777" />
      </svg>
      <span className="ml-2">中</span>
      <div className="ml-3 flex flex-col items-center font-['Open_Sans',sans-serif]">
        <time className="leading-[19px]">12:04</time>
        <time className="leading-[19px]">2019/8/24</time>
      </div>
      <button type="button" aria-label="通知" className="ml-5">
        <svg width="17" height="17" viewBox="0 0 17 17">
          <path d="M.500 1.500h16v12h-5.500l-2.500 2.500L6 13.500H.500z" fill="none" stroke="#fff" strokeWidth="1.200" />
        </svg>
      </button>
      <span className="mr-1 ml-5 h-10 w-px bg-[#555]" />
    </div>
  </footer>
);

const BARS = [
  'bg-[#5ad1c0]', 'bg-[#5ad1c0]', 'bg-[#66d3a2]', 'bg-[#7cd77f]', 'bg-[#8fd968]', 'bg-[#a9dc58]', 'bg-[#c5dc4d]', 'bg-[#dcd94a]',
  'bg-[#2a2d38]', 'bg-[#2a2d38]', 'bg-[#2a2d38]', 'bg-[#2a2d38]',
];

/* floating input-method bar and level meter */
const Floaters = () => (
  <>
    <div className="absolute right-[238px] bottom-10 z-10 flex h-[22px] w-[50px] items-center bg-white pl-1">
      <span className="h-5 border-l-2 border-dotted border-[#bbb]" />
      <svg width="16" height="16" viewBox="0 0 16 16" className="ml-1.5">
        <path d="M1 2.500L13.500 0 16 13.500 3.500 16z" fill="#f4511e" stroke="#f4511e" strokeLinejoin="round" />
        <path d="M12 4c-3-1-7-.500-7 1.500 0 2.500 7 1 7 3.700 0 2.300-4.500 2.800-7.500 2" fill="none" stroke="#fff" strokeWidth="2" />
      </svg>
      <svg width="6" height="10" viewBox="0 0 6 10" className="ml-3">
        <path d="M.500 1h5" stroke="#000" strokeWidth="2" />
        <path d="M0 6.500h6l-3 3z" />
      </svg>
    </div>
    <div className="absolute right-0 bottom-10 z-10 flex h-[57px] w-2.5 flex-col-reverse gap-px rounded-tl-sm bg-[#4a4e5c] py-1 pr-0.5 pl-1">
      {BARS.map((c, i) => (
        <span key={i} className={`h-[3px] ${c}`} />
      ))}
    </div>
  </>
);

const App: React.FC = () => {
  return (
    <div className="relative flex h-screen flex-col overflow-hidden bg-[#555] font-['Noto_Sans','Noto_Sans_CJK_SC',sans-serif]">
      <TitleBar />
      <MenuBar />
      <Toolbars />
      <div className="flex min-h-0 flex-1">
        <Document />
        <ToolsPanel />
      </div>
      <Taskbar />
      <Floaters />
    </div>
  );
};

export default App;
